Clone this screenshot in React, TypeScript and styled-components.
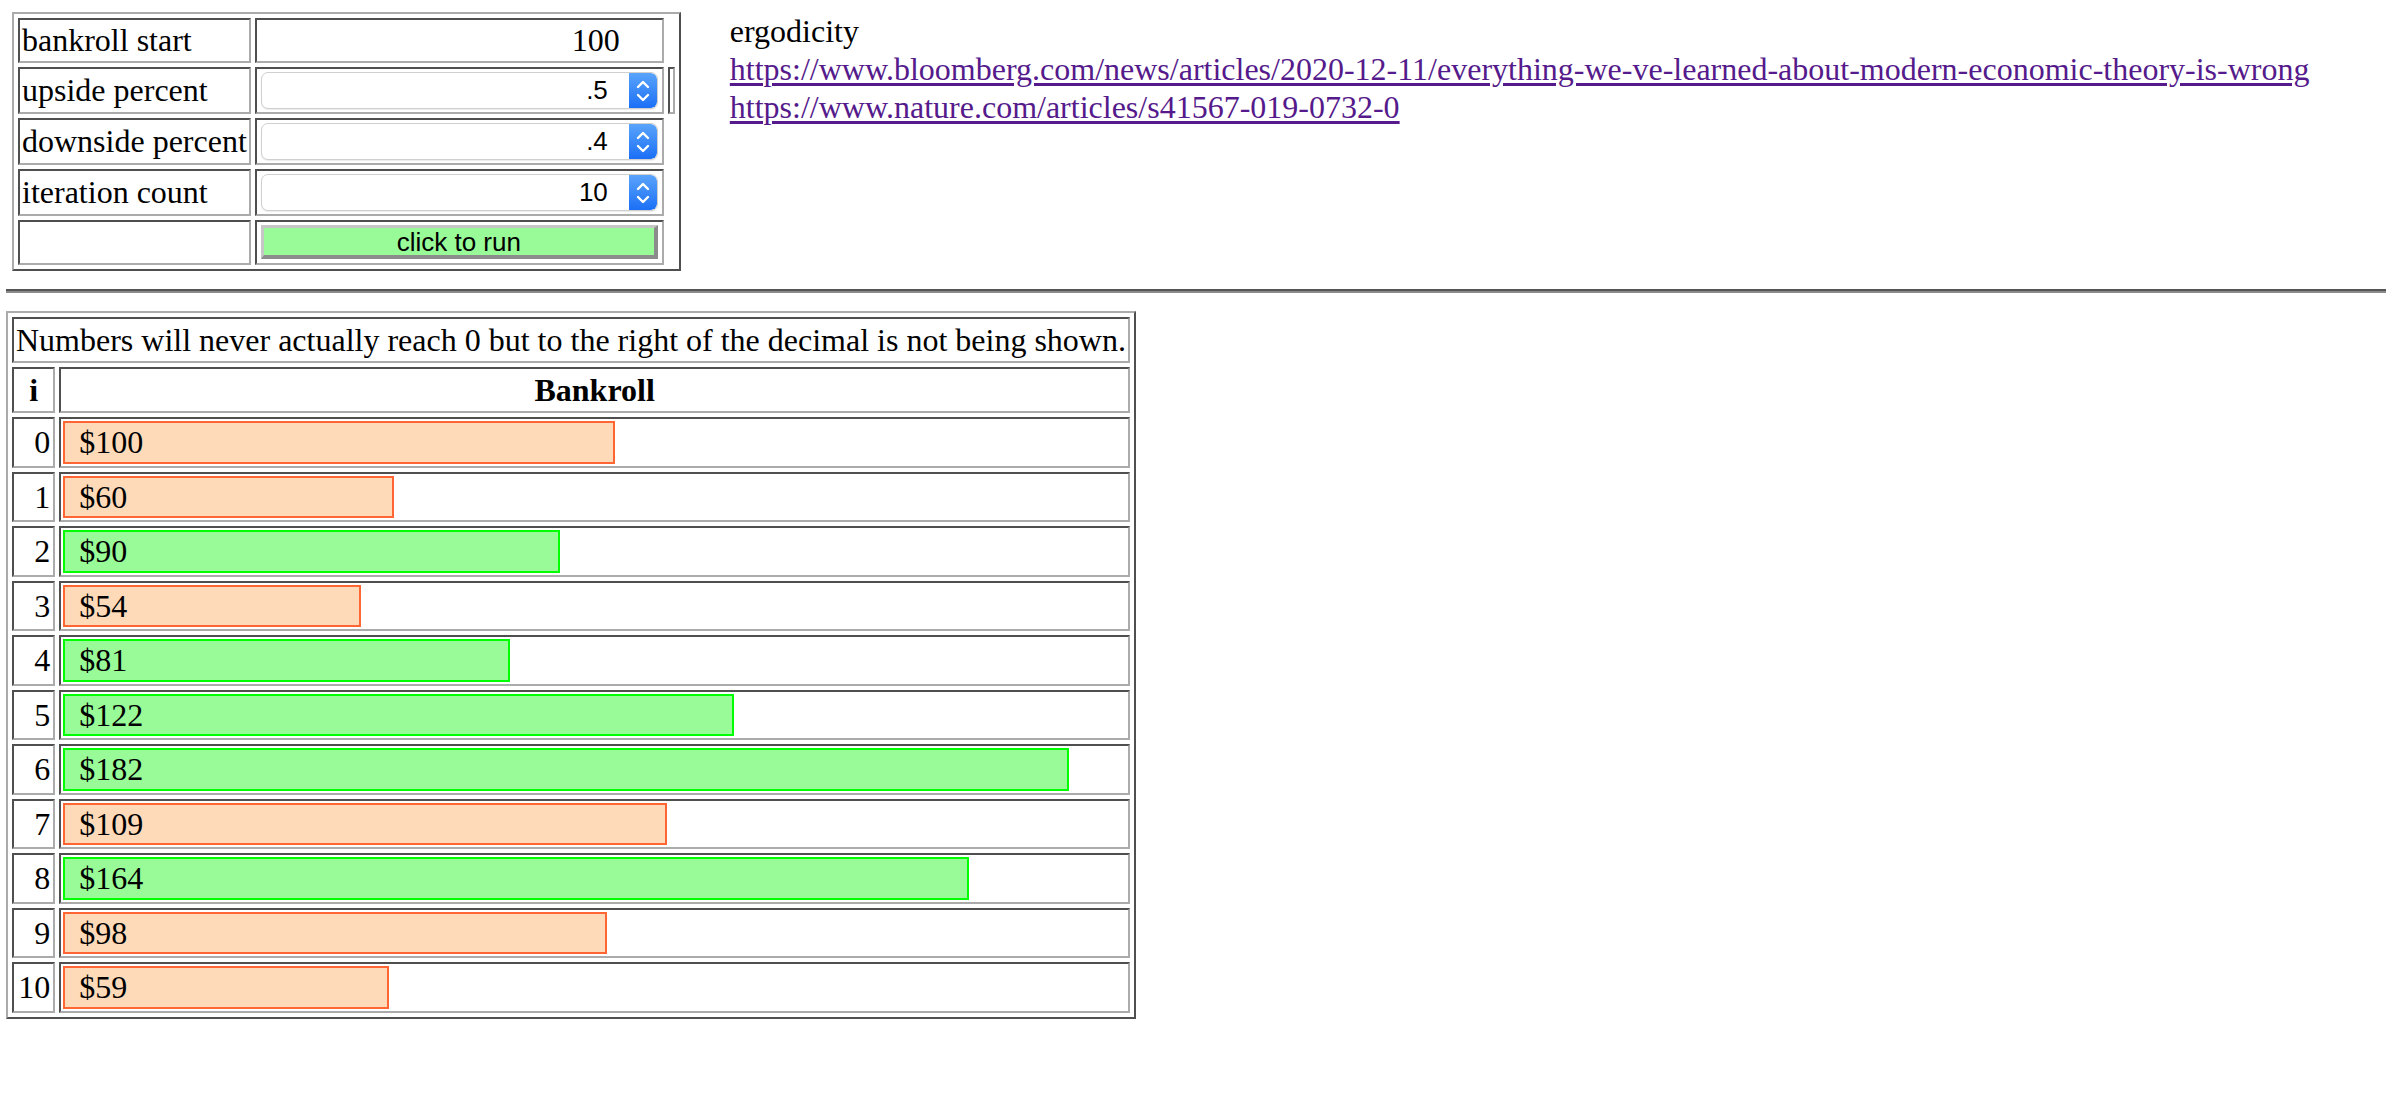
import React from "react";
import styled, { createGlobalStyle } from "styled-components";

const LIGHT = "#ababab";
const DARK = "#4f4f4f";

const GlobalStyle = createGlobalStyle`
  html, body { margin: 0; padding: 0; background: #ffffff; }
  body {
    font-family: "Liberation Serif", "Times New Roman", serif;
    font-size: 32px;
    color: #000;
  }
`;

const Page = styled.div`
  padding: 12px 0 0 6px;
`;

const TopSection = styled.div`
  display: flex;
  align-items: flex-start;
  gap: 49px;
  padding-left: 6px;
`;

const FrameTable = styled.table`
  border-collapse: separate;
  border-spacing: 4px;
  border-style: solid;
  border-width: 2px;
  border-color: ${LIGHT} ${DARK} ${DARK} ${LIGHT};
  font-family: "Liberation Serif", "Times New Roman", serif;
  font-size: 32px;
  line-height: 37px;
`;

const Cell = styled.td<{ $align?: "left" | "right" | "center"; $w?: number }>`
  border-style: solid;
  border-width: 2px;
  border-color: ${DARK} ${LIGHT} ${LIGHT} ${DARK};
  padding: 2px;
  text-align: ${(p) => p.$align ?? "left"};
  vertical-align: middle;
  white-space: nowrap;
  ${(p) => (p.$w ? `width: ${p.$w}px;` : "")}
`;

const ThinCell = styled.td`
  border-style: solid;
  border-width: 2px;
  border-color: ${DARK} ${LIGHT} ${LIGHT} ${DARK};
  padding: 0;
  width: 3px;
`;

const PlainValue = styled.div`
  text-align: right;
  padding-right: 40px;
  line-height: 37px;
`;

const NumberBox = styled.div`
  display: flex;
  align-items: stretch;
  height: 35px;
  margin: 1px 2px;
  border: 1px solid #cfcfcf;
  border-radius: 7px;
  background: #fff;
  overflow: hidden;
  box-shadow: 0 1px 1px rgba(0, 0, 0, 0.08);
`;

const NumberInput = styled.input`
  flex: 1;
  min-width: 0;
  border: none;
  outline: none;
  background: transparent;
  font-family: "Liberation Sans", Arial, sans-serif;
  font-size: 26px;
  text-align: right;
  padding: 0 21px 0 4px;
  color: #000;
`;

const Spinner = styled.div`
  width: 28px;
  display: flex;
  align-items: center;
  justify-content: center;
  background: linear-gradient(#5aa4fb, #1b6ff6);
  border-radius: 0 6px 6px 0;
`;

const RunButton = styled.button`
  display: block;
  width: calc(100% - 4px);
  margin: 1px 2px 2px 2px;
  height: 34px;
  background: #98fb98;
  border-style: solid;
  border-width: 3px 4px 4px 3px;
  border-color: #c6c6c6 #8c8c8c #8c8c8c #c6c6c6;
  font-family: "Liberation Sans", Arial, sans-serif;
  font-size: 26px;
  line-height: 26px;
  color: #000;
  padding: 0;
  cursor: pointer;
`;

const Info = styled.div`
  font-family: "Liberation Serif", "Times New Roman", serif;
  font-size: 32px;
  line-height: 38px;
`;

const InfoLink = styled.a`
  display: block;
  color: #551a8b;
  text-decoration: underline;
  text-underline-offset: 3px;
`;

const Rule = styled.hr`
  margin: 18px 0 18px 0;
  border: none;
  border-top: 2px solid #555;
  border-bottom: 2px solid #8a8a8a;
  height: 0;
`;

const ResultTable = styled(FrameTable)`
  line-height: 38px;
`;

const HeadCell = styled(Cell).attrs({ as: "th" })`
  font-weight: bold;
  text-align: center;
`;

const IndexCell = styled(Cell)`
  text-align: right;
  padding-right: 3px;
`;

const BarCell = styled(Cell)`
  padding: 2px;
`;

const Bar = styled.div<{ $up: boolean }>`
  box-sizing: border-box;
  height: 42.5px;
  line-height: 38px;
  padding-left: 14px;
  border: 2px solid ${(p) => (p.$up ? "#00ff00" : "#ff6633")};
  background: ${(p) => (p.$up ? "#98fb98" : "#ffdab9")};
`;

const Chevrons = () => (
  <svg width="28" height="34" viewBox="0 0 28 34" aria-hidden>
    <path d="M9 13 L14 8 L19 13" fill="none" stroke="#fff" strokeWidth="2.4" strokeLinecap="round" strokeLinejoin="round" />
    <path d="M9 21 L14 26 L19 21" fill="none" stroke="#fff" strokeWidth="2.4" strokeLinecap="round" strokeLinejoin="round" />
  </svg>
);

const NumberField = ({ value }: { value: string }) => (
  <NumberBox>
    <NumberInput readOnly value={value} />
    <Spinner>
      <Chevrons />
    </Spinner>
  </NumberBox>
);

const results = [
  { v: 100, up: false },
  { v: 60, up: false },
  { v: 90, up: true },
  { v: 54, up: false },
  { v: 81, up: true },
  { v: 121.5, up: true },
  { v: 182.25, up: true },
  { v: 109.35, up: false },
  { v: 164.025, up: true },
  { v: 98.415, up: false },
  { v: 59.049, up: false },
];

export default function App() {
  return (
    <>
      <GlobalStyle />
      <Page>
        <TopSection>
          <FrameTable>
            <tbody>
              <tr>
                <Cell>bankroll start</Cell>
                <Cell $w={401}>
                  <PlainValue>100</PlainValue>
                </Cell>
              </tr>
              <tr>
                <Cell>upside percent</Cell>
                <Cell $w={401}>
                  <NumberField value=".5" />
                </Cell>
                <ThinCell />
              </tr>
              <tr>
                <Cell>downside percent</Cell>
                <Cell $w={401}>
                  <NumberField value=".4" />
                </Cell>
              </tr>
              <tr>
                <Cell>iteration count</Cell>
                <Cell $w={401}>
                  <NumberField value="10" />
                </Cell>
              </tr>
              <tr>
                <Cell />
                <Cell $w={401}>
                  <RunButton>click to run</RunButton>
                </Cell>
              </tr>
            </tbody>
          </FrameTable>
          <Info>
            <div>ergodicity</div>
            <InfoLink href="#">
              https://www.bloomberg.com/news/articles/2020-12-11/everything-we-ve-learned-about-modern-economic-theory-is-wrong
            </InfoLink>
            <InfoLink href="#">https://www.nature.com/articles/s41567-019-0732-0</InfoLink>
          </Info>
        </TopSection>
        <Rule />
        <ResultTable>
          <tbody>
            <tr>
              <Cell colSpan={2}>
                Numbers will never actually reach 0 but to the right of the decimal is not being shown.
              </Cell>
            </tr>
            <tr>
              <HeadCell>i</HeadCell>
              <HeadCell>Bankroll</HeadCell>
            </tr>
            {results.map((r, i) => (
              <tr key={i}>
                <IndexCell>{i}</IndexCell>
                <BarCell>
                  <Bar $up={r.up} style={{ width: `${r.v * 5.52}px` }}>
                    ${Math.round(r.v)}
                  </Bar>
                </BarCell>
              </tr>
            ))}
          </tbody>
        </ResultTable>
      </Page>
    </>
  );
}
